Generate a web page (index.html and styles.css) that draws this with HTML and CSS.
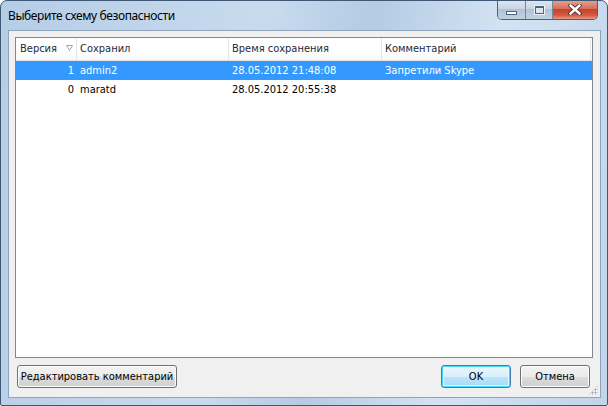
FILE: index.html
```html
<!DOCTYPE html>
<html>
<head>
<meta charset="utf-8">
<link rel="stylesheet" href="styles.css">
</head>
<body>
<div class="window">
  <div class="titlebar">
    <div class="title">Выберите схему безопасности</div>
    <div class="controls">
      <div class="ctl min"><span class="min-bar"></span></div>
      <div class="ctl max"><span class="max-box"></span></div>
      <div class="ctl close">
        <svg width="14" height="11" viewBox="0 0 14 11"><path d="M2.5 1.5 L11.5 9.5 M11.5 1.5 L2.5 9.5" stroke="#4a2018" stroke-width="4.2" stroke-linecap="round"/><path d="M2.5 1.5 L11.5 9.5 M11.5 1.5 L2.5 9.5" stroke="#fff" stroke-width="2.6" stroke-linecap="round"/></svg>
      </div>
    </div>
  </div>
  <div class="client">
    <div class="list">
      <div class="row header">
        <div class="c c1">Версия<span class="sort"><svg width="7" height="6" viewBox="0 0 7 6"><path d="M0.5 0.5 H6.5 L3.5 5.5 Z" fill="none" stroke="#a0a7b0" stroke-width="1"/></svg></span></div>
        <div class="c c2">Сохранил</div>
        <div class="c c3">Время сохранения</div>
        <div class="c c4">Комментарий</div>
      </div>
      <div class="row sel">
        <div class="c c1 num">1</div>
        <div class="c c2">admin2</div>
        <div class="c c3">28.05.2012 21:48:08</div>
        <div class="c c4">Запретили Skype</div>
      </div>
      <div class="row">
        <div class="c c1 num">0</div>
        <div class="c c2">maratd</div>
        <div class="c c3">28.05.2012 20:55:38</div>
        <div class="c c4"></div>
      </div>
    </div>
    <div class="buttons">
      <button class="btn edit">Редактировать комментарий</button>
      <div class="spacer"></div>
      <button class="btn ok">OK</button>
      <button class="btn cancel">Отмена</button>
    </div>
    <div class="grip"></div>
  </div>
</div>
</body>
</html>
```
FILE: styles.css
```css
html, body {
  margin: 0;
  padding: 0;
  width: 608px;
  height: 406px;
  overflow: hidden;
  background: #ffffff;
}
.window {
  width: 606px;
  height: 404px;
  border: 1px solid #3e5875;
  border-radius: 7px 7px 2px 2px;
  background: linear-gradient(100deg, #b6cde6 0%, #c8dbee 40%, #b4cbe4 55%, #d3e3f3 75%, #c0d5ea 100%);
  display: flex;
  flex-direction: column;
  overflow: hidden;
}
.titlebar {
  height: 29px;
  display: flex;
  align-items: flex-start;
  position: relative;
}
.title {
  font-family: "Noto Sans", "Open Sans", sans-serif;
  font-size: 12px;
  color: #000;
  padding: 6px 0 0 7px;
  letter-spacing: -0.4px;
}
.controls {
  position: absolute;
  right: 9px;
  top: -1px;
  display: flex;
  border: 1px solid #4a5f78;
  border-top: none;
  border-radius: 0 0 5px 5px;
  overflow: hidden;
  height: 19px;
}
.ctl {
  height: 19px;
  display: flex;
  align-items: center;
  justify-content: center;
}
.min, .max {
  width: 26px;
  background: linear-gradient(#dfe8f2 0%, #c9d6e4 45%, #b2c3d6 50%, #c2d2e3 100%);
  border-right: 1px solid #7388a1;
}
.min { width: 27px; }
.min-bar {
  width: 9px;
  height: 2px;
  margin-top: 6px;
  background: #fff;
  border: 1px solid #4f6479;
}
.max-box {
  width: 7px;
  height: 5px;
  border: 1px solid #4f6479;
  border-top-width: 2px;
  box-shadow: 0 0 0 1px #f0f4f8;
  background: #dce6f0;
}
.close {
  width: 44px;
  background: linear-gradient(#e8a593 0%, #d6705c 45%, #c4412c 50%, #d5593f 80%, #e79a82 100%);
}
.client {
  margin: 0 6px 7px 7px;
  flex: 1;
  background: #f0f0f0;
  border: 1px solid #8ea4bd;
  display: flex;
  flex-direction: column;
  position: relative;
}
.list {
  margin: 6px 7px 0 6px;
  height: 319px;
  background: #fff;
  border: 1px solid #828790;
  font-family: "DejaVu Sans Condensed", "DejaVu Sans", Tahoma, sans-serif;
  font-size: 11px;
}
.row {
  display: flex;
  height: 19px;
  align-items: center;
  color: #000;
}
.row.header {
  height: 22px;
  border-bottom: 1px solid #e3e5e8;
  background: linear-gradient(#ffffff 0%, #ffffff 55%, #f7f8f9 100%);
}
.row.header .c {
  border-right: 1px solid #e3e5e8;
  height: 22px;
  line-height: 22px;
  color: #1e2a3a;
}
.row.sel {
  background: #3399ff;
  color: #fff;
}
.c {
  padding-left: 5px;
  box-sizing: border-box;
  white-space: nowrap;
  overflow: hidden;
}
.c1 { width: 61px; position: relative; }
.c2 { width: 152px; padding-left: 3px; }
.c3 { width: 153px; padding-left: 3px; }
.c4 { width: 209px; padding-left: 3px; }
.num { text-align: right; padding-right: 3px; }
.row.header .c1 { padding-left: 4px; }
.sort {
  position: absolute;
  left: 50px;
  top: -1px;
}
.buttons {
  display: flex;
  margin: 7px 10px 0 8px;
  gap: 9px;
}
.spacer { flex: 1; }
.btn {
  height: 23px;
  font-family: "DejaVu Sans Condensed", "DejaVu Sans", Tahoma, sans-serif;
  font-size: 11px;
  white-space: nowrap;
  color: #000;
  border: 1px solid #707070;
  border-radius: 3px;
  background: linear-gradient(#f2f2f2 0%, #ebebeb 50%, #dddddd 51%, #cfcfcf 100%);
  box-shadow: inset 0 0 0 1px #fcfcfc;
  padding: 0;
  margin: 0;
}
.edit { width: 160px; }
.ok {
  width: 70px;
  border-color: #3c7fb1;
  box-shadow: inset 0 0 0 1px #48d8fb, inset 0 0 0 2px #e8f6fd;
  background: linear-gradient(#eaf6fd 0%, #d9f0fc 50%, #bee6fd 51%, #a7d9f5 100%);
}
.cancel { width: 70px; }
.grip {
  position: absolute;
  right: 2px;
  bottom: 2px;
  width: 10px;
  height: 10px;
  background-image: radial-gradient(circle, #a0a0a0 0.8px, transparent 1.2px);
  background-size: 3px 3px;
  clip-path: polygon(100% 0, 100% 100%, 0 100%);
}
```
